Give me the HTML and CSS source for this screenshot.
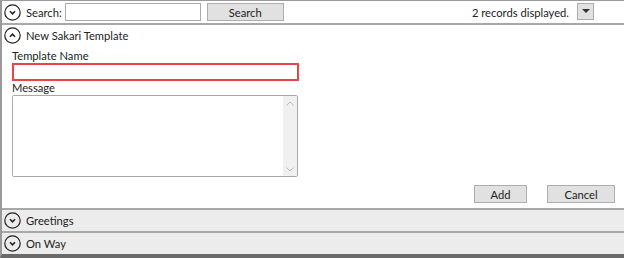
FILE: index.html
```html
<!DOCTYPE html>
<html lang="en">
<head>
  <meta charset="UTF-8">
  <title>Sakari Templates</title>
  <link rel="stylesheet" href="styles.css">
</head>
<body>

  <div class="window">
    <div class="toolbar">
      <span class="chevron">
        <svg viewBox="0 0 17 17" width="17" height="17"><circle cx="8.5" cy="8.5" r="7.7" fill="none" stroke="#222" stroke-width="1.2"/><path d="M6 7.3 L8.5 9.8 L11 7.3" fill="none" stroke="#222" stroke-width="1.6"/></svg>
      </span>
      <label class="search-label" for="search">Search:</label>
      <input type="text" id="search" class="search-box">
      <button class="btn search-btn">Search</button>
      <span class="records">2 records displayed.</span>
      <button class="drop-btn">
        <svg viewBox="0 0 8 4" width="8" height="4"><path d="M0 0 L8 0 L4 4 Z" fill="#333"/></svg>
      </button>
    </div>

    <div class="panel open">
      <div class="panel-head">
        <span class="chevron">
          <svg viewBox="0 0 17 17" width="17" height="17"><circle cx="8.5" cy="8.5" r="7.7" fill="none" stroke="#222" stroke-width="1.2"/><path d="M6 9.7 L8.5 7.2 L11 9.7" fill="none" stroke="#222" stroke-width="1.6"/></svg>
        </span>
        New Sakari Template
      </div>
      <div class="panel-body">
        <label class="field-label" for="tname">Template Name</label>
        <input type="text" id="tname" class="text-field invalid">
        <label class="field-label" for="msg">Message</label>
        <div class="memo">
          <textarea id="msg"></textarea>
          <div class="scrollbar">
            <svg viewBox="0 0 8 5" width="8" height="5"><path d="M0.5 4.5 L4 1 L7.5 4.5" fill="none" stroke="#bbb" stroke-width="1"/></svg>
            <svg viewBox="0 0 8 5" width="8" height="5"><path d="M0.5 0.5 L4 4 L7.5 0.5" fill="none" stroke="#bbb" stroke-width="1"/></svg>
          </div>
        </div>
        <div class="actions">
          <button class="btn add-btn">Add</button>
          <button class="btn cancel-btn">Cancel</button>
        </div>
      </div>
    </div>

    <div class="panel closed">
      <div class="panel-head">
        <span class="chevron">
          <svg viewBox="0 0 17 17" width="17" height="17"><circle cx="8.5" cy="8.5" r="7.7" fill="none" stroke="#222" stroke-width="1.2"/><path d="M6 7.3 L8.5 9.8 L11 7.3" fill="none" stroke="#222" stroke-width="1.6"/></svg>
        </span>
        Greetings
      </div>
    </div>

    <div class="panel closed">
      <div class="panel-head">
        <span class="chevron">
          <svg viewBox="0 0 17 17" width="17" height="17"><circle cx="8.5" cy="8.5" r="7.7" fill="none" stroke="#222" stroke-width="1.2"/><path d="M6 7.3 L8.5 9.8 L11 7.3" fill="none" stroke="#222" stroke-width="1.6"/></svg>
        </span>
        On Way
      </div>
    </div>
  </div>

</body>
</html>
```

FILE: styles.css
```css
body {
  margin: 0;
  background-color: #ffffff;
  font-family: Lato, "Open Sans", sans-serif;
  font-size: 11.2px;
  color: #222;
}

.window {
  width: 622px;
  height: 254px;
  border-left: 2px solid #9a9a9a;
  border-right: 1px solid #9a9a9a;
  border-bottom: 4px solid #6a6a6a;
  display: flex;
  flex-direction: column;
  background: #fff;
}

.toolbar {
  height: 22px;
  display: flex;
  align-items: center;
  border-top: 1px solid #9a9a9a;
  border-bottom: 2px solid #a8a8a8;
  padding-left: 2px;
  padding-right: 30px;
}

.chevron {
  display: inline-flex;
  width: 17px;
  height: 17px;
  margin-right: 5px;
}

.search-label {
  margin-right: 3px;
}

.search-box {
  width: 132px;
  height: 16px;
  border: 1px solid #aaa;
  padding: 0 1px;
  margin: 0;
}

.btn {
  font-family: Lato, "Open Sans", sans-serif;
  font-size: 11.2px;
  color: #222;
  background: #e1e1e1;
  border: 1px solid #adadad;
  padding: 0;
  height: 18px;
  line-height: 15px;
}

.search-btn {
  width: 77px;
  margin-left: 6px;
}

.records {
  margin-left: auto;
  margin-right: 8px;
}

.drop-btn {
  width: 17px;
  height: 17px;
  background: #e1e1e1;
  border: 1px solid #adadad;
  padding: 0;
  display: flex;
  align-items: center;
  justify-content: center;
  margin-top: -2px;
}

.panel-head {
  height: 21px;
  display: flex;
  align-items: center;
  padding-left: 2px;
}

.panel.open {
  flex: 1;
  display: flex;
  flex-direction: column;
}

.panel-body {
  flex: 1;
  padding: 3px 9px 0 10px;
  display: flex;
  flex-direction: column;
}

.field-label {
  display: block;
  line-height: 13px;
  margin-bottom: 1px;
}

.text-field {
  width: 283px;
  height: 14px;
  border: 1px solid #aaa;
  padding: 0;
  margin: 0;
}

.text-field.invalid {
  border: 2px solid #e8454b;
  height: 14px;
  width: 283px;
}

.memo {
  width: 284px;
  height: 80px;
  border: 1px solid #aaa;
  border-radius: 2px;
  display: flex;
}

.memo textarea {
  flex: 1;
  border: none;
  resize: none;
  outline: none;
  margin: 0;
  padding: 0;
}

.scrollbar {
  width: 14px;
  background: #f0f0f0;
  display: flex;
  flex-direction: column;
  justify-content: space-between;
  align-items: center;
  padding: 5px 0 4px;
}

.actions {
  display: flex;
  justify-content: flex-end;
  gap: 20px;
  margin-top: 8px;
}

.add-btn {
  width: 53px;
}

.cancel-btn {
  width: 68px;
}

.panel.closed {
  background: #ececec;
  border-top: 2px solid #a8a8a8;
}
```
